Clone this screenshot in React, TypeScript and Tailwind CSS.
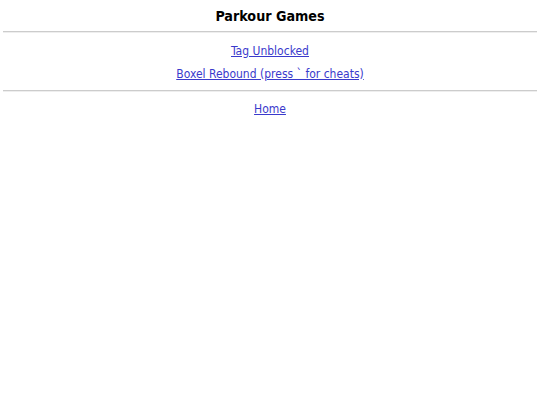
export default function App() {
  return (
    <div className="min-h-[405px] bg-white px-[3px] text-center" style={{ fontFamily: '"DejaVu Sans Condensed", "DejaVu Sans", Verdana, sans-serif' }}>
      <h1 className="pt-[8px] text-[14.2px] font-bold leading-[17px] text-black">Parkour Games</h1>
      <div className="mt-[6px] h-[2px] border-t border-[#cccccc] bg-[#eeeeee]" />
      <div className="mt-[11px] flex flex-col items-center gap-[8px] text-[12px] leading-[15px]">
        <a href="#" className="text-[#3a3acc] underline">Tag Unblocked</a>
        <a href="#" className="text-[#3a3acc] underline">Boxel Rebound (press ` for cheats)</a>
      </div>
      <div className="mt-[8px] h-[2px] border-t border-[#cccccc] bg-[#eeeeee]" />
      <div className="mt-[10px] text-[12px] leading-[15px]">
        <a href="#" className="text-[#3a3acc] underline">Home</a>
      </div>
    </div>
  );
}
